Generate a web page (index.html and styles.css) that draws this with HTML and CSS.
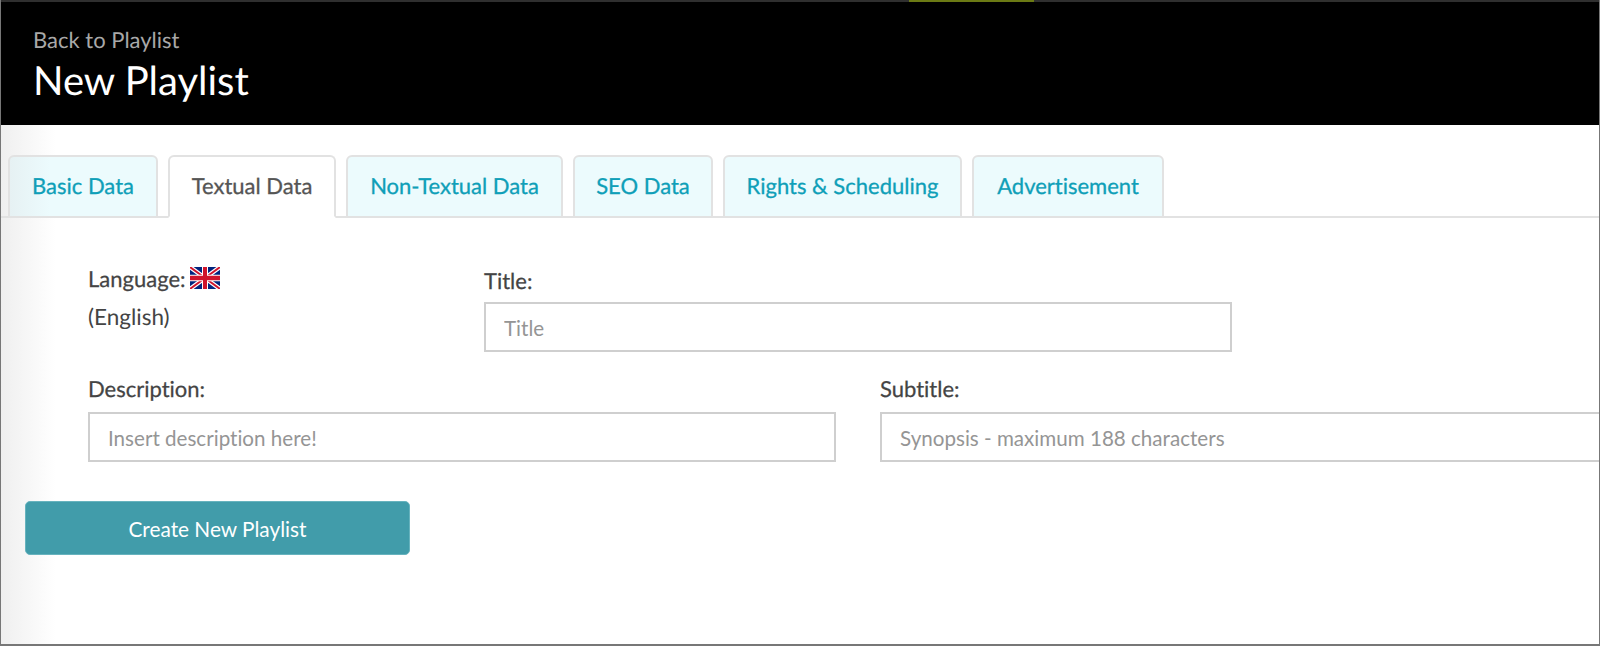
FILE: index.html
```html
<!DOCTYPE html>
<html lang="en">
<head>
<meta charset="utf-8">
<title>New Playlist</title>
<link rel="stylesheet" href="styles.css">
</head>
<body>
<div class="window">
  <div class="strip"><span class="strip-accent"></span></div>
  <header class="head">
    <a class="back">Back to Playlist</a>
    <h1 class="page-title">New Playlist</h1>
  </header>
  <main class="content">
    <nav class="tabs">
      <a class="tab t1">Basic Data</a>
      <a class="tab t2 active">Textual Data</a>
      <a class="tab t3">Non-Textual Data</a>
      <a class="tab t4">SEO Data</a>
      <a class="tab t5">Rights &amp; Scheduling</a>
      <a class="tab t6">Advertisement</a>
    </nav>
    <form class="form">
      <div class="row row-top">
        <div class="lang">
          <div class="lang-line"><label class="label">Language:</label>
            <svg class="flag" viewBox="0 0 60 40" width="30" height="22" preserveAspectRatio="none">
              <rect width="60" height="40" fill="#00247d"/>
              <path d="M0 0L60 40M60 0L0 40" stroke="#fff" stroke-width="8"/>
              <path d="M0 0L60 40M60 0L0 40" stroke="#cf142b" stroke-width="3.5"/>
              <path d="M30 0V40M0 20H60" stroke="#fff" stroke-width="12"/>
              <path d="M30 0V40M0 20H60" stroke="#cf142b" stroke-width="8"/>
            </svg>
          </div>
          <div class="lang-name">(English)</div>
        </div>
        <div class="field field-title">
          <label class="label">Title:</label>
          <input class="input" type="text" placeholder="Title">
        </div>
      </div>
      <div class="row row-bottom">
        <div class="field field-desc">
          <label class="label">Description:</label>
          <input class="input" type="text" placeholder="Insert description here!">
        </div>
        <div class="field field-sub">
          <label class="label">Subtitle:</label>
          <input class="input" type="text" placeholder="Synopsis - maximum 188 characters">
        </div>
      </div>
      <button class="submit" type="button">Create New Playlist</button>
    </form>
  </main>
</div>
</body>
</html>
```
FILE: styles.css
```css
* { box-sizing: border-box; }
html, body { margin: 0; padding: 0; height: 100%; overflow: hidden; background: #fff; }
body { font-family: Lato, "Liberation Sans", sans-serif; color: #4a4a4a; text-rendering: geometricPrecision; font-variant-ligatures: none; }
.window { width: 1600px; height: 646px; display: flex; flex-direction: column; border-left: 1px solid #777; border-right: 1px solid #777; border-bottom: 2px solid #777; overflow: hidden; }
.strip { height: 2px; background: #2f2f2f; padding-left: 908px; flex: none; }
.strip-accent { display: block; width: 125px; height: 2px; background: #6b7a14; }
.head { height: 123px; flex: none; background: #000; padding: 24px 32px 0; }
.back { display: block; font-size: 22px; line-height: 28px; color: #a8a8a8; }
.page-title { margin: 0; font-size: 40px; line-height: 52px; font-weight: 400; color: #fff; }
.content { flex: 1; min-height: 0; background: linear-gradient(90deg, #efefef 0, #fbfbfb 40px, #fff 55px); padding-top: 30px; }
.tabs { display: flex; gap: 10px; height: 63px; padding-left: 7px; border-bottom: 2px solid #e2e2e2; }
.tab { height: 63px; display: flex; align-items: center; justify-content: center; padding: 0 0 2px 0; font-size: 22px; color: #0f9fb8; -webkit-text-stroke: 0.3px currentColor; background: #ecfbfd; border: 2px solid #e2e2e2; border-radius: 6px 6px 0 0; }
.t1 { width: 150px; background: linear-gradient(90deg, #e6f1f3, #ecfbfd 40px); }
.t2 { width: 168px; }
.t3 { width: 217px; }
.t4 { width: 140px; }
.t5 { width: 239px; }
.t6 { width: 192px; }
.active { background: #fff; color: #555; border-bottom-color: #fff; }
.form { display: flex; flex-direction: column; }
.label { font-size: 22px; font-weight: 400; color: #444; -webkit-text-stroke: 0.25px #444; }
.row { display: flex; }
.row-top { padding: 0 0 0 87px; margin-top: 48px; height: 102px; }
.lang { width: 396px; font-size: 22.5px; }
.lang-line { display: flex; align-items: center; gap: 4px; height: 24px; margin-top: 0; }
.flag { display: block; }
.lang-name { margin-top: 15px; line-height: 24px; color: #444; }
.field { display: flex; flex-direction: column; }
.field .label { line-height: 24px; height: 33px; margin-top: 3px; }
.row-bottom .field .label { height: 35px; }
.field-title { width: 748px; }
.input { width: 100%; height: 50px; flex: none; border: 2px solid #cfcfcf; background: #fff; padding: 2px 18px 0; font: 400 20.6px Lato, sans-serif; font-variant-ligatures: none; color: #444; outline: none; }
.input::placeholder { color: #959595; opacity: 1; }
.row-bottom { padding-left: 87px; margin-top: 6px; }
.field-desc { width: 748px; flex: none; margin-right: 44px; }
.field-sub { width: 760px; flex: none; }
.submit { width: 385px; height: 54px; margin: 39px 0 0 24px; padding: 1px 0 0; border: 1px solid #67b3be; border-radius: 5px; background: #419caa; color: #fff; font: 400 20.8px Lato, sans-serif; font-variant-ligatures: none; }
```
